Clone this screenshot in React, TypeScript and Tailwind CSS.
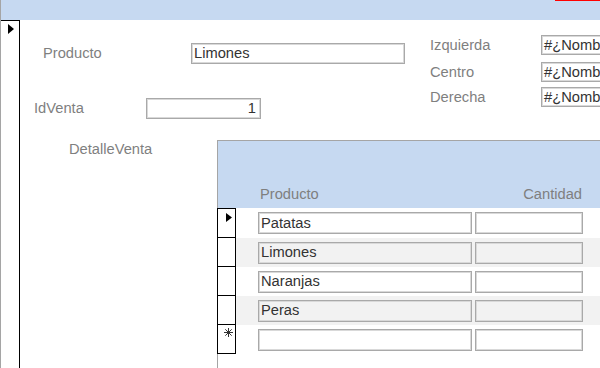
import React from 'react'
import clsx from 'clsx'

// Access-style form: Venta with DetalleVenta subform

const labelCls = "text-[14.7px] leading-[17px] text-[#7f7f7f] whitespace-nowrap";

function TextBox({ children, className }: { children?: React.ReactNode; className?: string }) {
    return (
        <div
            className={clsx(
                "flex items-center shrink-0 overflow-hidden whitespace-nowrap border border-[#a9a9a9] shadow-[inset_0_0_0_1px_#d9d9d9] px-[2px] text-[14.7px] leading-[17px] text-[#333333]",
                className
            )}
        >
            {children}
        </div>
    );
}

function Arrow({ w, h }: { w: number; h: number }) {
    return (
        <svg width={w} height={h} viewBox={`0 0 ${w} ${h}`}>
            <polygon points={`0,0 ${w},${h / 2} 0,${h}`} fill="#000" />
        </svg>
    );
}

function Star() {
    return (
        <svg width="9" height="9" viewBox="0 0 9 9" stroke="#333" strokeWidth="1">
            <line x1="4.5" y1="0" x2="4.5" y2="9" />
            <line x1="0" y1="4.5" x2="9" y2="4.5" />
            <line x1="1.3" y1="1.3" x2="7.7" y2="7.7" />
            <line x1="7.7" y1="1.3" x2="1.3" y2="7.7" />
        </svg>
    );
}

const rows = [
    { name: "Patatas", alt: false },
    { name: "Limones", alt: true },
    { name: "Naranjas", alt: false },
    { name: "Peras", alt: true },
];

export default function App() {
    return (
        <div className="w-[600px] h-[368px] overflow-hidden bg-white flex flex-col border-l border-[#a5a5a5] font-['Liberation_Sans',Arial,sans-serif]">
            {/* header band */}
            <div className="h-[20px] shrink-0 bg-[#c6d9f1] flex justify-end">
                <div className="w-[45px] h-px bg-[#ff0000]" />
            </div>

            <div className="flex flex-1 min-h-0">
                {/* record selector */}
                <div className="w-[19px] shrink-0 border-t border-r border-black pl-[7px] pt-[3px]">
                    <Arrow w={6} h={10} />
                </div>

                <div className="flex-1 flex flex-col min-w-0">
                    <div className="flex">
                        <div className="flex flex-col w-[385px] shrink-0">
                            <div className="mt-[23px] flex items-center h-[21px]">
                                <span className={clsx(labelCls, "ml-[23px] w-[148px]")}>Producto</span>
                                <TextBox className="w-[214px] h-[21px]">Limones</TextBox>
                            </div>
                            <div className="mt-[34px] flex items-center h-[21px]">
                                <span className={clsx(labelCls, "ml-[14px] w-[112px]")}>IdVenta</span>
                                <TextBox className="w-[115px] h-[21px] justify-end pr-[4px]">1</TextBox>
                            </div>
                        </div>

                        <div className="ml-[25px] flex flex-col shrink-0">
                            <div className="mt-[15px] flex items-center h-[20px]">
                                <span className={clsx(labelCls, "w-[111px]")}>Izquierda</span>
                                <TextBox className="w-[100px] h-[20px]">#¿Nombre?</TextBox>
                            </div>
                            <div className="mt-[7px] flex items-center h-[20px]">
                                <span className={clsx(labelCls, "w-[111px]")}>Centro</span>
                                <TextBox className="w-[100px] h-[20px]">#¿Nombre?</TextBox>
                            </div>
                            <div className="mt-[5px] flex items-center h-[20px]">
                                <span className={clsx(labelCls, "w-[111px]")}>Derecha</span>
                                <TextBox className="w-[100px] h-[20px]">#¿Nombre?</TextBox>
                            </div>
                        </div>
                    </div>

                    <div className="mt-[21px] flex flex-1 min-h-0">
                        <span className={clsx(labelCls, "ml-[49px] w-[148px] shrink-0 pt-[1px]")}>DetalleVenta</span>

                        {/* subform */}
                        <div className="flex-1 flex flex-col border-t border-[#a5a5a5] min-w-0">
                            <div className="h-[67px] shrink-0 bg-[#c6d9f1] border-l border-[#a5a5a5] flex items-end pb-[5px]">
                                <span className={clsx(labelCls, "ml-[42px] w-[215px]")}>Producto</span>
                                <span className={clsx(labelCls, "w-[107px] text-right")}>Cantidad</span>
                            </div>

                            {rows.map((r, i) => (
                                <div key={r.name} className={clsx("flex shrink-0", i === 0 ? "h-[30px]" : "h-[29px]")}>
                                    <div
                                        className={clsx(
                                            "w-[19px] shrink-0 border-x border-b border-black bg-white",
                                            i === 0 && "border-t pl-[8px] pt-[4px]"
                                        )}
                                    >
                                        {i === 0 && <Arrow w={6} h={9} />}
                                    </div>
                                    <div className={clsx("flex-1 flex items-center pl-[22px] gap-[3px]", r.alt ? "bg-[#f2f2f2]" : "bg-white")}>
                                        <TextBox className={clsx("w-[214px] h-[22px]", r.alt && "bg-[#f2f2f2]")}>{r.name}</TextBox>
                                        <TextBox className={clsx("w-[108px] h-[22px]", r.alt && "bg-[#f2f2f2]")} />
                                    </div>
                                </div>
                            ))}

                            <div className="flex shrink-0 h-[29px]">
                                <div className="w-[19px] shrink-0 border-x border-b border-black pl-[6px] pt-[3px]">
                                    <Star />
                                </div>
                                <div className="flex-1 flex items-center pl-[22px] gap-[3px]">
                                    <TextBox className="w-[214px] h-[22px]" />
                                    <TextBox className="w-[108px] h-[22px]" />
                                </div>
                            </div>

                            <div className="flex-1 border-l border-[#a5a5a5]" />
                        </div>
                    </div>
                </div>
            </div>
        </div>
    );
}
